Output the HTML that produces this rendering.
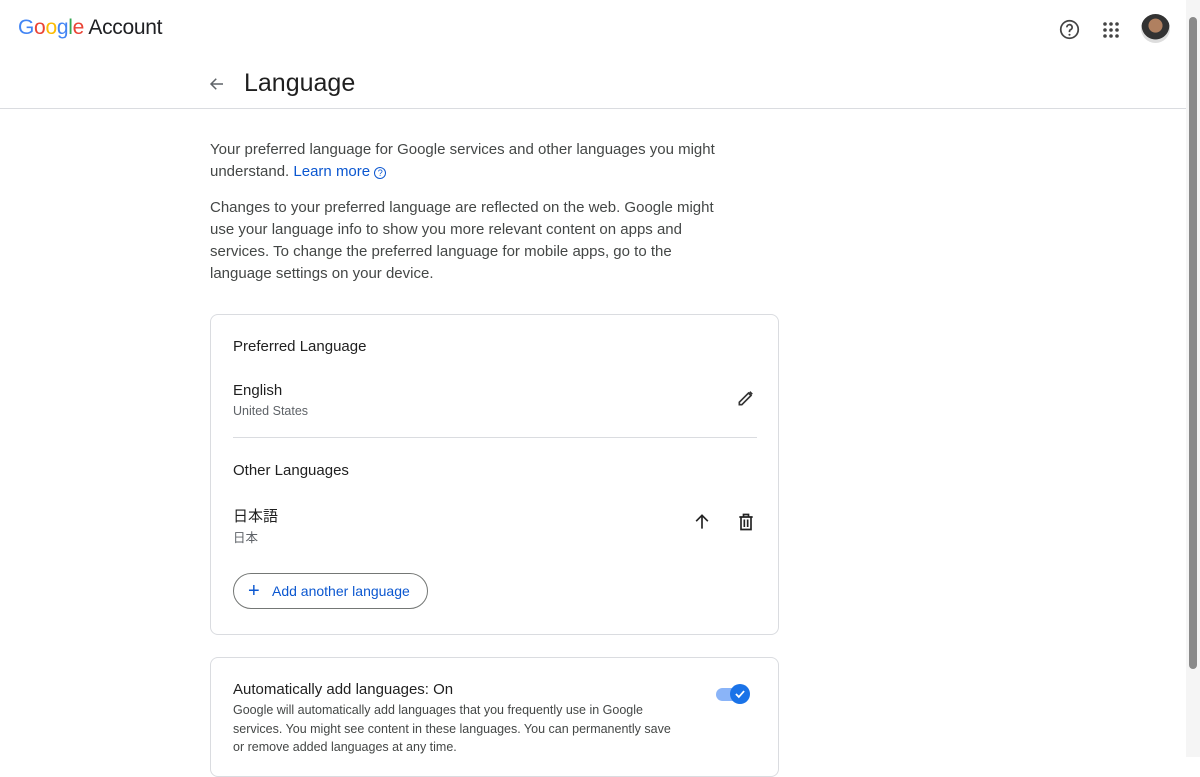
<!DOCTYPE html>
<html><head><meta charset="utf-8"><style>
*{margin:0;padding:0;box-sizing:border-box}
body{width:1200px;height:757px;overflow:hidden;background:#fff;font-family:"Liberation Sans","Noto Sans CJK JP",sans-serif;color:#1f1f1f;position:relative}
.abs{position:absolute}
.p{font-size:15px;line-height:22px;color:#444746;left:210px;width:515px}
.card{position:absolute;left:210px;width:569px;border:1px solid #dadce0;border-radius:8px}
.h{font-size:15px;color:#1f1f1f;font-weight:500}
.sub{font-size:12.5px;color:#5f6368}
</style></head><body>
<div class="abs" style="left:18px;top:16px;font-size:21px;letter-spacing:-0.3px"><span style="color:#4285f4">G</span><span style="color:#ea4335">o</span><span style="color:#fbbc05">o</span><span style="color:#4285f4">g</span><span style="color:#34a853">l</span><span style="color:#ea4335">e</span> <span style="color:#202124">Account</span></div>
<svg class="abs" style="left:1059px;top:19px" width="21" height="21" viewBox="0 0 24 24"><circle cx="12" cy="12" r="10" fill="none" stroke="#444" stroke-width="2"/><path d="M9 9.5a3 3 0 1 1 4 2.8c-.8.4-1 1-1 1.7V15" fill="none" stroke="#444" stroke-width="2"/><circle cx="12" cy="18" r="1.2" fill="#444"/></svg>
<svg class="abs" style="left:1103px;top:22px" width="16" height="16" viewBox="0 0 16 16" fill="#444"><circle cx="2" cy="2" r="1.8"/><circle cx="8" cy="2" r="1.8"/><circle cx="14" cy="2" r="1.8"/><circle cx="2" cy="8" r="1.8"/><circle cx="8" cy="8" r="1.8"/><circle cx="14" cy="8" r="1.8"/><circle cx="2" cy="14" r="1.8"/><circle cx="8" cy="14" r="1.8"/><circle cx="14" cy="14" r="1.8"/></svg>
<div class="abs" style="left:1141px;top:14px;width:29px;height:29px;border-radius:50%;background:radial-gradient(circle at 50% 40%,#b08060 0 30%,#333 32% 60%,#ddd 62%)"></div>
<div class="abs" style="left:1186px;top:0;width:14px;height:757px;background:#f5f5f5"></div>
<div class="abs" style="left:1189px;top:17px;width:8px;height:652px;background:#8a8a8a;border-radius:4px"></div>
<svg class="abs" style="left:208px;top:75px" width="18" height="18" viewBox="0 0 24 24"><path d="M20 12H5M11 5l-7 7 7 7" fill="none" stroke="#5f6368" stroke-width="2"/></svg>
<div class="abs" style="left:244px;top:69px;font-size:25px;color:#1f1f1f">Language</div>
<div class="abs" style="left:0;top:108px;width:1186px;height:1px;background:#dadce0"></div>
<div class="abs p" style="top:139px">Your preferred language for Google services and other languages you might understand. <span style="color:#0b57d0">Learn more</span> <span style="display:inline-block;width:12px;height:12px;border:1px solid #0b57d0;border-radius:50%;font-size:9px;line-height:11px;text-align:center;color:#0b57d0;vertical-align:0">?</span></div>
<div class="abs p" style="top:197px">Changes to your preferred language are reflected on the web. Google might use your language info to show you more relevant content on apps and services. To change the preferred language for mobile apps, go to the language settings on your device.</div>
<div class="card" style="top:314px;height:321px">
 <div class="abs h" style="left:22px;top:23px">Preferred Language</div>
 <div class="abs" style="left:22px;top:67px;font-size:15px">English</div>
 <div class="abs sub" style="left:22px;top:89px">United States</div>
 <svg class="abs" style="left:525px;top:73px" width="20" height="20" viewBox="0 0 24 24"><path d="M4 20h3L18 9l-3-3L4 17v3zM15 6l3 3M16.5 4.5l3 3" fill="none" stroke="#333" stroke-width="2"/></svg>
 <div class="abs" style="left:22px;top:122px;width:524px;height:1px;background:#dadce0"></div>
 <div class="abs h" style="left:22px;top:147px">Other Languages</div>
 <div class="abs" style="left:22px;top:190px;font-size:15px">日本語</div>
 <div class="abs sub" style="left:22px;top:212px">日本</div>
 <svg class="abs" style="left:481px;top:197px" width="20" height="20" viewBox="0 0 24 24"><path d="M12 20V5M5 11l7-7 7 7" fill="none" stroke="#222" stroke-width="2"/></svg>
 <svg class="abs" style="left:525px;top:197px" width="20" height="20" viewBox="0 0 24 24"><path d="M4 6h16M9 6V3h6v3M6 6v15h12V6M10 9v9M14 9v9" fill="none" stroke="#222" stroke-width="2"/></svg>
 <div class="abs" style="left:22px;top:258px;width:195px;height:36px;border:1px solid #747775;border-radius:18px;color:#0b57d0;font-size:14px;font-weight:500;line-height:34px;padding-left:38px">Add another language</div>
 <div class="abs" style="left:37px;top:266px;color:#0b57d0;font-size:20px;line-height:20px">+</div>
</div>
<div class="card" style="top:657px;height:120px">
 <div class="abs" style="left:22px;top:23px;font-size:15px">Automatically add languages: On</div>
 <div class="abs" style="left:22px;top:43px;width:445px;font-size:12.5px;line-height:18.5px;color:#444746">Google will automatically add languages that you frequently use in Google services. You might see content in these languages. You can permanently save or remove added languages at any time.</div>
 <div class="abs" style="left:505px;top:30px;width:30px;height:13px;border-radius:7px;background:#8ab4f8"></div>
 <div class="abs" style="left:519px;top:26px;width:20px;height:20px;border-radius:50%;background:#1a73e8"></div>
 <svg class="abs" style="left:522px;top:29px" width="14" height="14" viewBox="0 0 24 24"><path d="M5 12l5 5 9-10" fill="none" stroke="#fff" stroke-width="3"/></svg>
</div>
</body></html>
